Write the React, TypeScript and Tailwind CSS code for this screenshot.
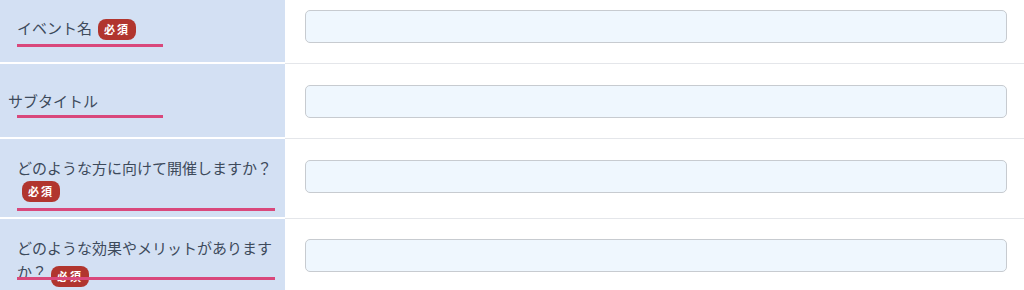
import React from 'react'

const font = { fontFamily: '"Noto Sans CJK JP", "Noto Sans", sans-serif' }

const Badge = ({ className = '' }: { className?: string }) => (
  <span
    className={`inline-flex h-[21px] w-[38px] items-center justify-center rounded-[8px] bg-[#b1352e] text-[11px] font-bold leading-none tracking-[2px] text-white ${className}`}
  >
    必須
  </span>
)

const Underline = ({ w, className = '' }: { w: string; className?: string }) => (
  <div className={`relative z-10 ml-[17px] h-[3px] bg-[#d9487b] ${w} ${className}`} />
)

const Field = ({ h, pt, children }: { h: string; pt: string; children: React.ReactNode }) => (
  <div className={`flex ${h}`}>
    <div className="mb-[2px] w-[285px] shrink-0 bg-[#d3e0f3]">{children}</div>
    <div className={`flex-1 border-b border-[#e4e6ea] pl-[20px] pr-[17px] ${pt}`}>
      <input
        type="text"
        className="block h-[33px] w-full rounded-[5px] border border-[#c7cbd0] bg-[#eff7fe] outline-none"
      />
    </div>
  </div>
)

export default function App() {
  return (
    <div className="h-[290px] w-[1024px] overflow-hidden bg-white text-[15px] text-[#3d4a5b]" style={font}>
      <Field h="h-[64px]" pt="pt-[10px]">
        <div className="ml-[17px] mt-[17px] flex h-[22px] items-center gap-[6px]">
          <span>イベント名</span>
          <Badge className="mt-[2px]" />
        </div>
        <Underline w="w-[146px]" className="mt-[5px]" />
      </Field>

      <Field h="h-[75px]" pt="pt-[21px]">
        <div className="ml-[8px] mt-[26px] flex h-[22px] items-center">
          <span>サブタイトル</span>
        </div>
        <Underline w="w-[146px]" className="mt-[3px]" />
      </Field>

      <Field h="h-[80px]" pt="pt-[21px]">
        <p className="ml-[17px] mt-[18px] leading-[22px]">どのような方に向けて開催しますか？</p>
        <Badge className="ml-[22px]" />
        <Underline w="w-[258px]" className="mt-[6px]" />
      </Field>

      <Field h="h-[80px]" pt="pt-[20px]">
        <p className="ml-[17px] mt-[17px] w-[258px] leading-[24px]">
          どのような効果やメリットがありますか？
          <Badge className="relative top-[3px] ml-[4px] align-middle" />
        </p>
        <Underline w="w-[258px]" className="-mt-[7px]" />
      </Field>
    </div>
  )
}
